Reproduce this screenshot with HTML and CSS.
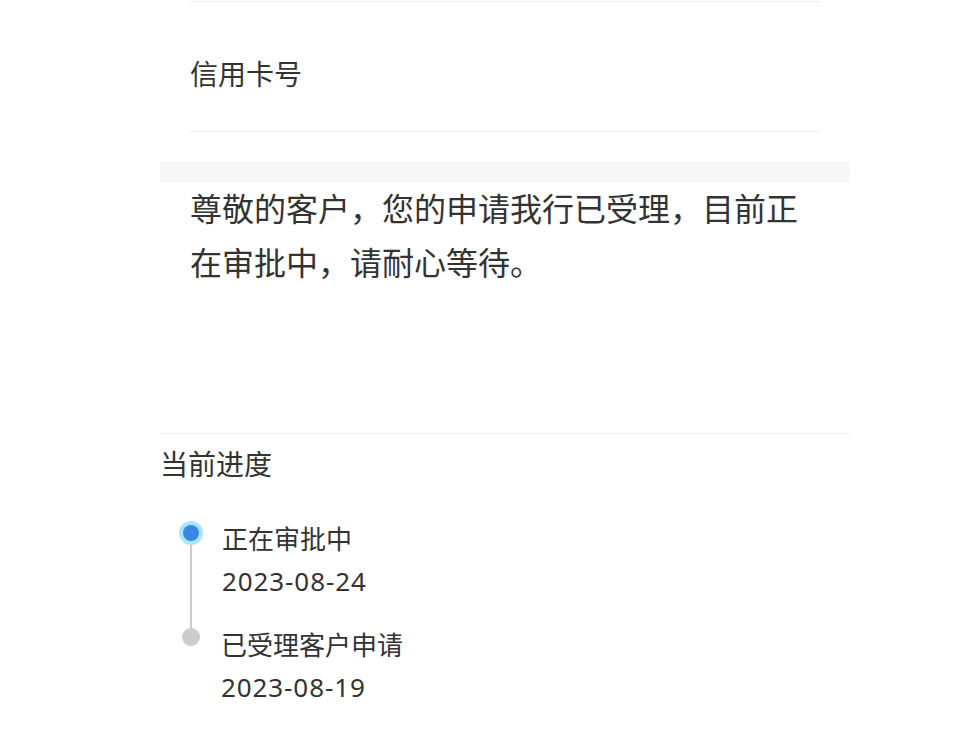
FILE: index.html
```html
<!DOCTYPE html>
<html lang="zh-CN">
<head>
    <meta charset="UTF-8">
    <meta name="viewport" content="width=device-width, initial-scale=1.0">
    <title>申请进度</title>
    <link rel="stylesheet" href="styles.css">
</head>
<body>
    <div class="page">
        <div class="fields">
            <div class="field">信用卡号</div>
        </div>

        <div class="divider"></div>

        <p class="notice">尊敬的客户，您的申请我行已受理，目前正在审批中，请耐心等待。</p>

        <div class="progress">
            <div class="progress-title">当前进度</div>
            <ul class="timeline">
                <li class="step active">
                    <div class="axis">
                        <span class="dot"></span>
                        <span class="line"></span>
                    </div>
                    <div class="step-body">
                        <div class="step-name">正在审批中</div>
                        <div class="step-date">2023-08-24</div>
                    </div>
                </li>
                <li class="step">
                    <div class="axis">
                        <span class="dot"></span>
                    </div>
                    <div class="step-body">
                        <div class="step-name">已受理客户申请</div>
                        <div class="step-date">2023-08-19</div>
                    </div>
                </li>
            </ul>
        </div>
    </div>
</body>
</html>
```

FILE: styles.css
```css
body {
    margin: 0;
    background: #fff;
    color: #333;
    font-family: "Noto Sans", "Noto Sans CJK SC", sans-serif;
}
.page {
    width: 690px;
    margin-left: 160px;
}
.fields {
    padding: 1px 30px 0;
}
.field {
    border-top: 1px solid #eee;
    border-bottom: 1px solid #eee;
    padding: 52px 0 37px;
    font-size: 28px;
    line-height: 40px;
}
.divider {
    height: 20px;
    margin-top: 30px;
    background: #f7f7f7;
}
.notice {
    margin: 0;
    padding: 0 30px 143px;
    font-size: 32px;
    line-height: 54px;
}
.progress {
    border-top: 1px solid #eee;
    padding-top: 10px;
}
.progress-title {
    font-size: 28px;
    line-height: 40px;
}
.timeline {
    list-style: none;
    margin: 34px 0 0;
    padding: 0;
}
.step {
    display: flex;
}
.axis {
    width: 62px;
    display: flex;
    flex-direction: column;
    align-items: center;
}
.dot {
    width: 18px;
    height: 18px;
    border-radius: 50%;
    background: #ccc;
    margin-top: 4px;
    position: relative;
    z-index: 1;
}
.active .dot {
    width: 16px;
    height: 16px;
    margin-top: 7px;
    background: #3a86e5;
    box-shadow: 0 0 0 4px #a9e6f9;
}
.line {
    flex: 1;
    width: 2px;
    background: #ccc;
    margin-top: 4px;
    margin-bottom: -12px;
}
.step-body {
    font-size: 26px;
    line-height: 42px;
}
.active .step-body {
    padding-bottom: 22px;
}
.step + .step .step-body {
    margin-left: -1px;
}
.step-date {
    letter-spacing: 0.9px;
}
```
